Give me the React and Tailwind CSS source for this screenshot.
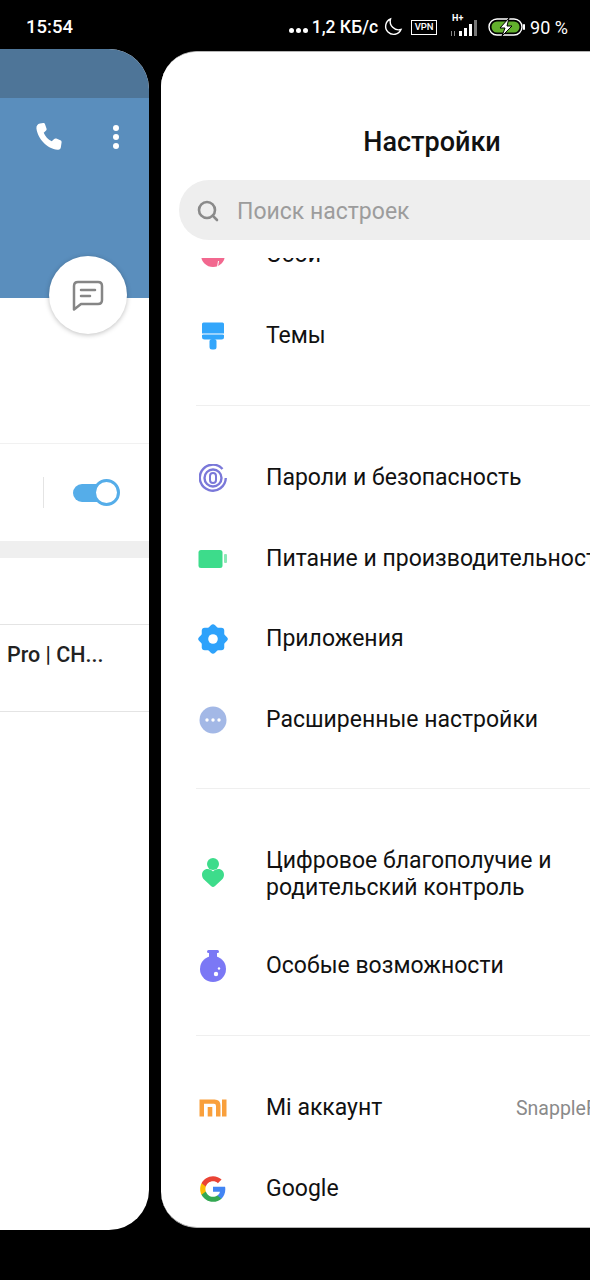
import React from 'react';
import { Search } from 'lucide-react';

const font = { fontFamily: 'Roboto, sans-serif' };

function Moon() {
  return (
    <svg width="20" height="20" viewBox="0 0 20 20" fill="none" stroke="#fff" strokeWidth="1.4">
      <path d="M7.5 2 A8 8 0 1 0 18 12.5 A8.5 8.5 0 0 1 7.5 2 Z" />
    </svg>
  );
}

function Signal() {
  return (
    <svg width="30" height="20" viewBox="0 0 30 20" fill="#fff">
      <rect x="9" y="14" width="3" height="5" />
      <rect x="14" y="11" width="3" height="8" />
      <rect x="19" y="7" width="3" height="12" />
      <rect x="24" y="3" width="3" height="16" fill="#777" />
      <rect x="1" y="14" width="1" height="5" fill="#888" />
      <rect x="4" y="14" width="1" height="5" fill="#888" />
    </svg>
  );
}

function StatusBattery() {
  return (
    <svg width="37" height="18" viewBox="0 0 37 18">
      <rect x="1" y="1" width="33" height="16" rx="8" fill="none" stroke="#fff" strokeWidth="1.4" />
      <rect x="3.5" y="3.5" width="28" height="11" rx="5.5" fill="#62b02c" />
      <rect x="35" y="6" width="2" height="6" rx="1" fill="#fff" />
      <path d="M21 0 L12 10 H17 L14 18 L24 8 H19 Z" fill="#fff" stroke="#000" strokeWidth="1" />
    </svg>
  );
}

function StatusBar() {
  return (
    <div className="h-[49px] flex items-center pl-[26px] pr-[22px] pt-[5px] text-white text-[17.5px] font-medium">
      <span className="text-[18.5px] pt-[2px]">15:54</span>
      <div className="ml-auto flex items-center">
        <div className="flex items-end gap-[2px] h-[14px] mr-[4px] pb-[1px]">
          <span className="w-[5px] h-[5px] rounded-full bg-white"></span>
          <span className="w-[5px] h-[5px] rounded-full bg-white"></span>
          <span className="w-[5px] h-[5px] rounded-full bg-white"></span>
        </div>
        <span className="mr-[5px]">1,2 КБ/с</span>
        <Moon />
        <span className="ml-[8px] w-[26px] h-[15px] border border-white flex items-center justify-center text-[9.5px] leading-none">VPN</span>
        <div className="relative ml-[13px] mr-[8px]">
          <span className="absolute left-[2px] -top-[3px] text-[9px] leading-none font-bold">H+</span>
          <Signal />
        </div>
        <StatusBattery />
        <span className="ml-[5px] font-normal text-[18px]">90 %</span>
      </div>
    </div>
  );
}

function ChatPanel() {
  return (
    <div className="relative w-[149px] h-[1181px] shrink-0 bg-white rounded-r-[40px] overflow-hidden">
      <div className="h-[49px] bg-[#4e7598]"></div>
      <div className="h-[200px] bg-[#5a8ebd] flex justify-end items-start pt-[24px] pr-[30px] gap-[50px]">
        <svg width="30" height="30" viewBox="0 0 28 28" fill="#fff">
          <path d="M6.5 1.5 L9.5 1 C10.5 1 11 1.5 11.3 2.3 L12.6 6 C12.9 6.9 12.7 7.6 12 8.2 L10 10 C11.3 13.3 14 16.3 17.5 18 L19.5 16 C20.2 15.3 21 15.1 21.8 15.5 L25.5 17 C26.4 17.4 26.8 18 26.7 19 L26 23.5 C25.8 25.2 24.8 26 23 25.8 C13 25 4.5 15.5 3.2 6 C3 3.8 4.3 1.8 6.5 1.5 Z" />
        </svg>
        <div className="flex flex-col gap-[3px] pt-[3px]">
          <span className="w-[6px] h-[6px] rounded-full bg-white"></span>
          <span className="w-[6px] h-[6px] rounded-full bg-white"></span>
          <span className="w-[6px] h-[6px] rounded-full bg-white"></span>
        </div>
      </div>
      <div className="h-[146px] border-b border-[#f1f1f1]"></div>
      <div className="h-[97px] relative flex items-center justify-end pr-[29px]">
        <div className="absolute left-[43px] top-[33px] w-px h-[31px] bg-[#e4e4e4]"></div>
        <div className="relative w-[47px] h-[27px]">
          <div className="absolute left-0 top-[5px] w-[34px] h-[18px] rounded-full bg-[#55ade9]"></div>
          <div className="absolute right-0 top-0 w-[27px] h-[27px] rounded-full bg-white border-[3px] border-[#55ade9]"></div>
        </div>
      </div>
      <div className="h-[17px] bg-[#efefef]"></div>
      <div className="h-[67px] border-b border-[#e4e4e4]"></div>
      <div className="h-[87px] border-b border-[#e4e4e4] flex items-center pl-[7px] pb-[26px] text-[21.5px] font-medium text-[#222]">
        Pro | CH...
      </div>
      <div className="absolute left-[49px] top-[207px] w-[78px] h-[78px] rounded-full bg-white shadow-[0_1px_5px_rgba(0,0,0,0.25)] flex items-center justify-center">
        <svg width="32" height="31" viewBox="0 0 32 31" fill="none" stroke="#868686" strokeWidth="2.5" strokeLinejoin="round" strokeLinecap="round">
          <path d="M6 2 H26 Q30 2 30 6 V20 Q30 24 26 24 H9 L2 29.5 V6 Q2 2 6 2 Z" />
          <path d="M9 10 H23 M9 16 H18" />
        </svg>
      </div>
    </div>
  );
}

function Fingerprint() {
  return (
    <svg width="28" height="28" viewBox="0 0 28 28" fill="none" stroke="#7a78d9" strokeWidth="2.4">
      <path d="M23.5 5 A13 13 0 1 0 26.8 14" />
      <circle cx="14" cy="14" r="8.5" />
      <rect x="11" y="9" width="6" height="10" rx="3" strokeWidth="2" />
    </svg>
  );
}

function Wallpaper() {
  return (
    <svg width="24" height="24" viewBox="0 0 24 24">
      <circle cx="12" cy="12" r="12" fill="#f2688f" />
      <path d="M17.5 18 L16.5 24" stroke="#fff" strokeWidth="1" />
    </svg>
  );
}

function Brush() {
  return (
    <svg width="22" height="28" viewBox="0 0 22 28" fill="#33a6fb">
      <rect x="0" y="0.5" width="22" height="12" rx="1.5" />
      <rect x="0" y="11" width="22" height="1" fill="#9dd3fc" />
      <path d="M0 13 H22 V15 Q22 17.5 19.5 17.5 H2.5 Q0 17.5 0 15 Z" />
      <rect x="7.5" y="17" width="7" height="10.5" rx="2.5" />
    </svg>
  );
}

function Power() {
  return (
    <svg width="30" height="20" viewBox="0 0 30 20">
      <rect x="0.5" y="1" width="24" height="18" rx="2.5" fill="#3ddc8b" />
      <rect x="26" y="5" width="3" height="9" rx="1" fill="#8be8b6" />
    </svg>
  );
}

function Gear() {
  return (
    <svg width="30" height="30" viewBox="0 0 30 30">
      <rect x="3.75" y="3.75" width="22.5" height="22.5" rx="3" fill="#2ea2fb" />
      <rect x="3.75" y="3.75" width="22.5" height="22.5" rx="3" fill="#2ea2fb" transform="rotate(45 15 15)" />
      <circle cx="15" cy="15" r="4.8" fill="#fff" />
    </svg>
  );
}

function More() {
  return (
    <svg width="28" height="28" viewBox="0 0 28 28">
      <circle cx="14" cy="14" r="13.5" fill="#a3b8e6" />
      <circle cx="8" cy="14" r="1.7" fill="#fff" />
      <circle cx="14" cy="14" r="1.7" fill="#fff" />
      <circle cx="20" cy="14" r="1.7" fill="#fff" />
    </svg>
  );
}

function Wellbeing() {
  return (
    <svg width="24" height="32" viewBox="0 0 24 32" fill="#3ddc8b" className="-mt-[3px]">
      <circle cx="12" cy="7" r="6" />
      <path d="M12 30 Q11 30 10 29 L3 22.5 C-1 18 1.5 12 6.5 12 C9 12 10.8 13 12 14.5 C13.2 13 15 12 17.5 12 C22.5 12 25 18 21 22.5 L14 29 Q13 30 12 30 Z" />
    </svg>
  );
}

function Flask() {
  return (
    <svg width="28" height="34" viewBox="0 0 28 34">
      <rect x="8" y="1" width="12" height="3" rx="1.5" fill="#7b78f5" />
      <rect x="10" y="3" width="8" height="8" fill="#7b78f5" />
      <circle cx="14" cy="20" r="13" fill="#7b78f5" />
      <circle cx="17" cy="25" r="2.2" fill="#fff" />
      <circle cx="20" cy="19.5" r="1.2" fill="#fff" />
    </svg>
  );
}

function MiLogo() {
  return (
    <svg width="28" height="18" viewBox="0 0 28 18" fill="#f9a03c">
      <path d="M0.5 0.5 H15.5 Q21.5 0.5 21.5 6.5 V17.5 H17 V7 Q17 4.8 15 4.8 H5 V17.5 H0.5 Z" />
      <rect x="8.7" y="8" width="4.6" height="9.5" />
      <rect x="23" y="0.5" width="4.5" height="17" />
    </svg>
  );
}

function GoogleLogo() {
  return (
    <svg width="28" height="28" viewBox="0 0 24 24">
      <path fill="#4285F4" d="M22.56 12.25c0-.78-.07-1.53-.2-2.25H12v4.26h5.92c-.26 1.37-1.04 2.53-2.21 3.31v2.77h3.57c2.08-1.92 3.28-4.74 3.28-8.09z" />
      <path fill="#34A853" d="M12 23c2.97 0 5.46-.98 7.28-2.66l-3.57-2.77c-.98.66-2.23 1.06-3.71 1.06-2.86 0-5.29-1.93-6.16-4.53H2.18v2.84C3.99 20.53 7.7 23 12 23z" />
      <path fill="#FBBC05" d="M5.84 14.09c-.22-.66-.35-1.36-.35-2.09s.13-1.43.35-2.09V7.07H2.18C1.43 8.55 1 10.22 1 12s.43 3.45 1.18 4.93l3.66-2.84z" />
      <path fill="#EA4335" d="M12 5.38c1.62 0 3.06.56 4.21 1.64l3.15-3.15C17.45 2.09 14.97 1 12 1 7.7 1 3.99 3.47 2.18 7.07l3.66 2.84c.87-2.6 3.3-4.53 6.16-4.53z" />
    </svg>
  );
}

function Row({ icon, label, value }) {
  return (
    <div className="h-[80.67px] flex items-center text-[23px] text-[#111] whitespace-nowrap">
      <div className="w-[105px] shrink-0 flex justify-center pr-[2px]">{icon}</div>
      <span className={value ? 'w-[250px] shrink-0' : ''}>{label}</span>
      {value && <span className="text-[19.5px] text-[#8a8a8a]">{value}</span>}
    </div>
  );
}

function SectionLine() {
  return <div className="ml-[35px] h-px bg-[#efefef]"></div>;
}

function SettingsPanel() {
  return (
    <div className="w-[500px] h-[1177px] shrink-0 mt-[2px] bg-white rounded-l-[36px] overflow-hidden border-y border-[#b5b5b5]">
      <div className="relative z-10 bg-white pt-[75px] pb-[18px]">
        <h1 className="h-[30px] leading-[30px] text-center text-[27px] font-medium text-[#111] w-[542px]">Настройки</h1>
        <div className="mt-[23px] ml-[18px] h-[60px] rounded-l-[30px] bg-[#eeeeee] flex items-center pl-[17px] pt-[2px] text-[23px] text-[#9c9c9c]">
          <Search size={24} strokeWidth={2.6} className="text-[#8a8a8a] mr-[17px]" />
          <span className="pt-[2px]">Поиск настроек</span>
        </div>
      </div>
      <div className="-mt-[43px]">
        <Row icon={<Wallpaper />} label="Обои" />
        <Row icon={<Brush />} label="Темы" />
        <div className="h-[29px]"></div>
        <SectionLine />
        <div className="h-[31.5px]"></div>
        <Row icon={<Fingerprint />} label="Пароли и безопасность" />
        <Row icon={<Power />} label="Питание и производительность" />
        <Row icon={<Gear />} label="Приложения" />
        <Row icon={<More />} label="Расширенные настройки" />
        <div className="h-[27.5px]"></div>
        <SectionLine />
        <div className="h-[34px]"></div>
        <div className="h-[103px] flex items-center text-[23px] leading-[27px] text-[#111] whitespace-nowrap">
          <div className="w-[105px] shrink-0 flex justify-center pr-[2px]"><Wellbeing /></div>
          <span>Цифровое благополучие и<br />родительский контроль</span>
        </div>
        <Row icon={<Flask />} label="Особые возможности" />
        <div className="h-[28px]"></div>
        <SectionLine />
        <div className="h-[32.5px]"></div>
        <Row icon={<MiLogo />} label="Mi аккаунт" value="SnappleF" />
        <Row icon={<GoogleLogo />} label="Google" />
      </div>
    </div>
  );
}

export default function App() {
  return (
    <div className="w-[590px] h-[1280px] bg-black overflow-hidden" style={font}>
      <StatusBar />
      <div className="flex gap-[12px]">
        <ChatPanel />
        <SettingsPanel />
      </div>
    </div>
  );
}
